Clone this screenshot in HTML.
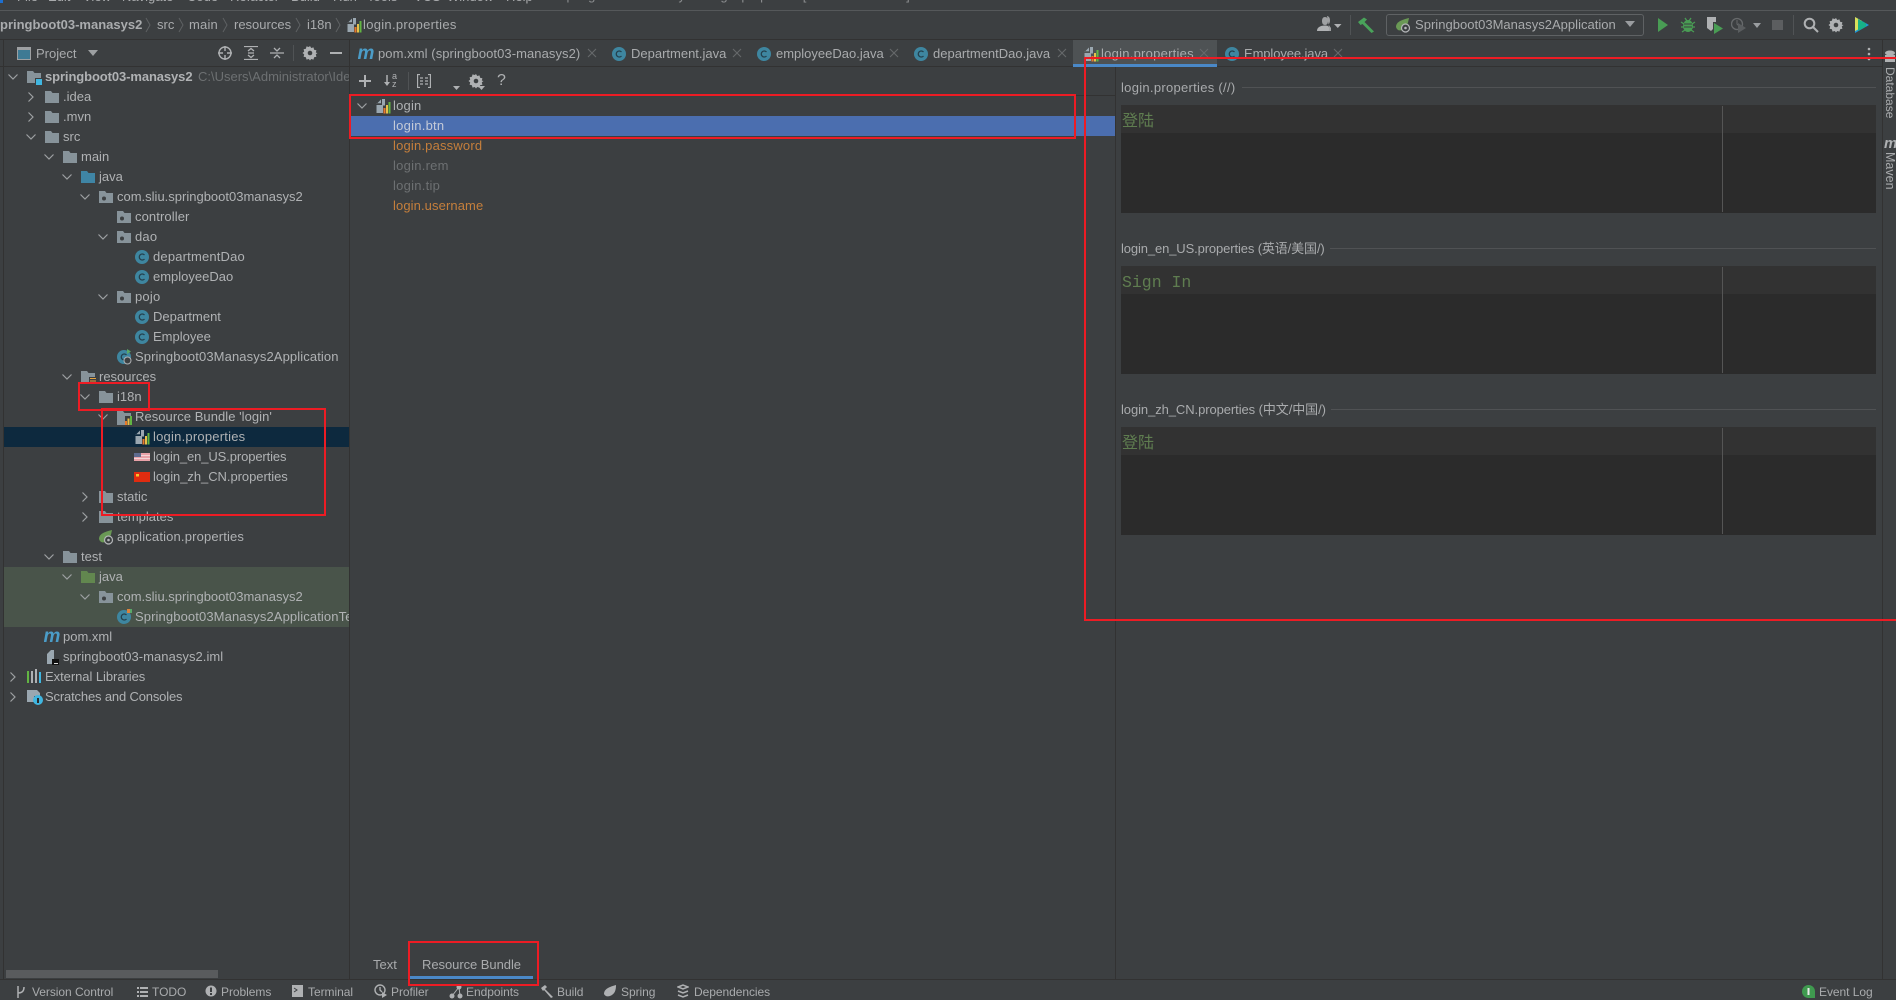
<!DOCTYPE html>
<html lang="en"><head><meta charset="utf-8"><title>login.properties</title>
<style>
html,body{margin:0;padding:0;background:#3c3f41;}
#p{position:relative;width:1896px;height:1000px;overflow:hidden;background:#3c3f41;font:13px/20px "Liberation Sans","Noto Sans CJK SC",sans-serif;color:#b0b2b4;}
.t{position:absolute;white-space:nowrap;height:20px;line-height:20px;}
.r{position:absolute;}
svg.i{position:absolute;width:16px;height:16px;overflow:visible;}
svg.x{position:absolute;width:10px;height:10px;top:48px;}
.red{position:absolute;border:2px solid #ed1c24;box-sizing:border-box;}
.g{color:#a9abad}
.o{color:#c57f3c}
.d{color:#6d7072}
.s{font-size:12px;letter-spacing:-.05px}
</style></head><body>
<svg width="0" height="0" style="position:absolute">
<defs>
<symbol id="dn" viewBox="0 0 16 16"><path d="M3.5 5.5L8 10l4.5-4.5" fill="none" stroke="#9da0a2" stroke-width="1.2"/></symbol>
<symbol id="rt" viewBox="0 0 16 16"><path d="M5.5 3.5L10 8l-4.5 4.5" fill="none" stroke="#9da0a2" stroke-width="1.2"/></symbol>
<symbol id="cx" viewBox="0 0 10 10"><path d="M1 1l8 8M9 1l-8 8" fill="none" stroke="#66696b" stroke-width="1.1"/></symbol>
<symbol id="f" viewBox="0 0 16 16"><path d="M1 2h6l1.5 2H15v10H1z" fill="#87939a"/></symbol>
<symbol id="fj" viewBox="0 0 16 16"><path d="M1 2h6l1.5 2H15v10H1z" fill="#3f85a5"/></symbol>
<symbol id="ft" viewBox="0 0 16 16"><path d="M1 2h6l1.5 2H15v10H1z" fill="#62874f"/></symbol>
<symbol id="fp" viewBox="0 0 16 16"><path d="M1 2h6l1.5 2H15v10H1z" fill="#87939a"/><circle cx="6" cy="9.5" r="2" fill="#3c3f41"/></symbol>
<symbol id="fm" viewBox="0 0 16 16"><path d="M1 2h6l1.5 2H15v10H1z" fill="#87939a"/><rect x="9" y="9" width="7" height="7" fill="#3c3f41"/><rect x="10" y="10" width="6" height="6" fill="#40b6e0"/></symbol>
<symbol id="fr" viewBox="0 0 16 16"><path d="M1 2h6l1.5 2H15v10H1z" fill="#87939a"/><rect x="9" y="8" width="7" height="8" fill="#3c3f41"/><path d="M10 9.5h6M10 12h6M10 14.5h6" stroke="#e8a33d" stroke-width="1.1"/></symbol>
<symbol id="c" viewBox="0 0 16 16"><circle cx="8" cy="8" r="7" fill="#3e86a0"/><path d="M10.5 6a3 3 0 1 0 0 4" fill="none" stroke="#24404d" stroke-width="1.3"/></symbol>
<symbol id="cr" viewBox="0 0 16 16"><circle cx="8" cy="8" r="7" fill="#3e86a0"/><path d="M10.5 6a3 3 0 1 0 0 4" fill="none" stroke="#24404d" stroke-width="1.3"/><path d="M11 0l4 2.5L11 5z" fill="#59a869"/><circle cx="11.5" cy="11.5" r="3.5" fill="#3c3f41" stroke="#afb1b3"/></symbol>
<symbol id="ct" viewBox="0 0 16 16"><circle cx="8" cy="8" r="7" fill="#3e86a0"/><path d="M10.5 6a3 3 0 1 0 0 4" fill="none" stroke="#24404d" stroke-width="1.3"/><path d="M11 0h3v4h-3z" fill="#d9823b"/><path d="M14 0h2v4h-2z" fill="#59a869"/></symbol>
<symbol id="b" viewBox="0 0 16 16"><path d="M1.5 6L6 1.5v3.8H1.8z" fill="#9aa7b0"/><path d="M7 1h3v6.5H8V15H1.5V7H7z" fill="#9aa7b0"/><rect x="8.5" y="10" width="2" height="5.5" fill="#e8792b"/><rect x="11" y="7" width="2" height="8.5" fill="#e7c04a"/><rect x="13.5" y="4" width="2" height="11.5" fill="#62b543"/></symbol>
<symbol id="fb" viewBox="0 0 16 16"><path d="M1 2h6l1.5 2H15v3h-6v9H1z" fill="#87939a"/><rect x="9" y="12" width="2" height="4" fill="#e8792b"/><rect x="11.5" y="9.5" width="2" height="6.5" fill="#e7c04a"/><rect x="14" y="7" width="2" height="9" fill="#62b543"/></symbol>
<symbol id="m" viewBox="0 0 16 16"><text x="8" y="13" text-anchor="middle" font-family="Liberation Sans" font-style="italic" font-weight="700" font-size="19" fill="#4b9cc7">m</text></symbol>
<symbol id="leaf" viewBox="0 0 16 16"><path d="M1 10C1 5 6 3 14 1c-1 5-2 10-7 12-3 1-5 0-6-3z" fill="#6a9955"/><circle cx="10.5" cy="11" r="4" fill="#3c3f41" stroke="#b5b7b9" stroke-width="1.2"/><circle cx="10.5" cy="11" r="1.3" fill="#b5b7b9"/></symbol>
<symbol id="gear" viewBox="0 0 16 16"><path d="M8 1l1.2 2 2.3-.6.6 2.3 2.3.6-.6 2.3L15.5 8l-1.7 1.4.6 2.3-2.3.6-.6 2.3-2.3-.6L8 15.5l-1.2-1.5-2.3.6-.6-2.3-2.3-.6.6-2.3L.5 8l1.7-1.4-.6-2.3 2.3-.6.6-2.3 2.3.6z" fill="#afb1b3"/><circle cx="8" cy="8" r="2.3" fill="#3c3f41"/></symbol>
</defs>
</svg>
<div id="p">
<!-- menu -->
<div class="r" style="left:0;top:0;width:1896px;height:10px;background:#3c3f41;overflow:hidden">
<div class="t" style="left:17px;top:-13px;color:#a9abad">File</div><div class="t" style="left:48px;top:-13px;color:#a9abad">Edit</div><div class="t" style="left:83px;top:-13px;color:#a9abad">View</div><div class="t" style="left:122px;top:-13px;color:#a9abad">Navigate</div><div class="t" style="left:187px;top:-13px;color:#a9abad">Code</div><div class="t" style="left:230px;top:-13px;color:#a9abad">Refactor</div><div class="t" style="left:291px;top:-13px;color:#a9abad">Build</div><div class="t" style="left:333px;top:-13px;color:#a9abad">Run</div><div class="t" style="left:367px;top:-13px;color:#a9abad">Tools</div><div class="t" style="left:414px;top:-13px;color:#a9abad">VCS</div><div class="t" style="left:447px;top:-13px;color:#a9abad">Window</div><div class="t" style="left:506px;top:-13px;color:#a9abad">Help</div>
<div class="t" style="left:560px;top:-14px;color:#8a8c8e">springboot03-manasys2 - login.properties [Resource Bundle]</div>
<div class="r" style="left:0;top:0;width:3px;height:3px;background:#1d6fd0"></div>
</div>
<div class="r" style="left:0;top:10px;width:1896px;height:1px;background:#55585a"></div>
<!-- breadcrumb -->
<div class="r" style="left:0;top:39px;width:1896px;height:1px;background:#323232"></div>
<div class="t" style="left:0;top:15px;font-weight:700;color:#aaacae;letter-spacing:0">pringboot03-manasys2</div>
<div class="t g" style="left:157px;top:15px">src</div>
<div class="t g" style="left:189px;top:15px;letter-spacing:.2px">main</div>
<div class="t g" style="left:234px;top:15px">resources</div>
<div class="t g" style="left:307px;top:15px">i18n</div>
<svg class="i" style="left:346px;top:17px"><use href="#b"/></svg>
<div class="t g" style="left:363px;top:15px;letter-spacing:.3px">login.properties</div>
<svg class="r" style="left:0;top:15px" width="345" height="20" fill="none" stroke="#5e6163"><path d="M146 3l4 7-4 7M179 3l4 7-4 7M223 3l4 7-4 7M296 3l4 7-4 7M336 3l4 7-4 7"/></svg>
<!-- toolbar right -->
<svg class="r" style="left:1316px;top:16px" width="30" height="18"><path d="M9 1c2 0 3 1.500 3 4s-1 4-3 4-3-1.500-3-4 1-4 3-4zM11 0c2 .3 3 2 3 4.500 0 1.500-.5 3-1.500 4L15 12v3h-2v-4z" fill="#9fa1a3"/><path d="M1 15c0-3.500 3-5.500 8-5.500s4 2 4 5.500z" fill="#afb1b3"/><path d="M18 8h7.500l-3.700 4z" fill="#afb1b3"/></svg>
<div class="r" style="left:1350px;top:15px;width:1px;height:20px;background:#505355"></div>
<svg class="r" style="left:1358px;top:17px" width="18" height="18"><path d="M0 5L6 .5l3 2-2.500 2.500L16 14.500 13.500 16 4.500 7 2.500 8z" fill="#49a35a"/></svg>
<div class="r" style="left:1386px;top:14px;width:258px;height:22px;box-sizing:border-box;border:1px solid #5f6264;border-radius:3px;background:#3c3f41"></div>
<svg class="i" style="left:1395px;top:17px"><use href="#leaf"/></svg>
<div class="t g" style="left:1415px;top:15px;letter-spacing:.02px">Springboot03Manasys2Application</div>
<svg class="r" style="left:1625px;top:21px" width="10" height="8"><path d="M0 0h10L5 6z" fill="#9a9da0"/></svg>
<svg class="r" style="left:1657px;top:17px" width="12" height="16"><path d="M1 1l10 7-10 7z" fill="#499c54"/></svg>
<svg class="r" style="left:1680px;top:16px" width="16" height="18"><ellipse cx="8" cy="10" rx="5" ry="6" fill="#499c54"/><path d="M1 6l3 2M15 6l-3 2M1 11h3M15 11h-3M2 16l3-2M14 16l-3-2M5 2l2 3M11 2l-2 3" stroke="#499c54" stroke-width="1.3"/><path d="M4 8h8M4 11h8" stroke="#3c3f41"/></svg>
<svg class="r" style="left:1706px;top:16px" width="18" height="18"><path d="M1 1h9v5H7v7l-2 2-4-3z" fill="#afb1b3"/><path d="M8 7l9 5.500-9 5.500z" fill="#499c54"/></svg>
<svg class="r" style="left:1731px;top:17px" width="16" height="18" opacity=".45"><circle cx="6" cy="7" r="5.500" fill="none" stroke="#9da0a2" stroke-width="1.3"/><path d="M6 3v4l2 2" stroke="#9da0a2" fill="none"/><path d="M7 6l8 5-8 5z" fill="#7f8284"/></svg>
<svg class="r" style="left:1753px;top:23px" width="9" height="6"><path d="M0 0h8L4 5z" fill="#9a9da0"/></svg>
<div class="r" style="left:1772px;top:20px;width:11px;height:10px;background:#5c5e60"></div>
<div class="r" style="left:1793px;top:15px;width:1px;height:20px;background:#505355"></div>
<svg class="r" style="left:1803px;top:17px" width="16" height="16" fill="none" stroke="#afb1b3" stroke-width="2"><circle cx="6.500" cy="6.500" r="4.800"/><path d="M10 10l5 5"/></svg>
<svg class="i" style="left:1828px;top:17px"><use href="#gear"/></svg>
<svg class="r" style="left:1855px;top:17px" width="15" height="16"><path d="M0 0l14 8-14 8z" fill="#2396d8"/><path d="M0 0l7 4v6l-7 4z" fill="#d9e05a"/><path d="M3 2l8 4.500v3L3 14z" fill="#17b187"/><path d="M0 3l3-1.500v11L0 14z" fill="#d9e05a"/></svg>
<!-- project header -->
<svg class="r" style="left:17px;top:47px" width="14" height="14"><rect x=".5" y=".5" width="13" height="12" fill="#3e7a94" stroke="#9da0a2"/><rect x="1" y="1" width="12" height="2" fill="#9da0a2"/></svg>
<div class="t g" style="left:36px;top:44px">Project</div>
<svg class="r" style="left:88px;top:50px" width="10" height="7"><path d="M0 0h10L5 6z" fill="#9da0a2"/></svg>
<svg class="r" style="left:218px;top:46px" width="14" height="14" fill="none" stroke="#afb1b3" stroke-width="1.4"><circle cx="7" cy="7" r="6"/><path d="M7 0v5M7 9v5M0 7h5M9 7h5"/></svg>
<svg class="r" style="left:244px;top:46px" width="14" height="14" fill="none" stroke="#afb1b3" stroke-width="1.3"><path d="M0 .5h14M0 13.500h14M4 5l3-2.500L10 5M4 9l3 2.500L10 9M4 7h6"/></svg>
<svg class="r" style="left:270px;top:46px" width="14" height="14" fill="none" stroke="#afb1b3" stroke-width="1.3"><path d="M0 7h14M4 2l3 3 3-3M4 12l3-3 3 3"/></svg>
<div class="r" style="left:293px;top:45px;width:1px;height:16px;background:#505355"></div>
<svg class="i" style="left:302px;top:45px"><use href="#gear"/></svg>
<div class="r" style="left:330px;top:52px;width:12px;height:2px;background:#afb1b3"></div>
<div class="r" style="left:0;top:66px;width:1882px;height:1px;background:#323232"></div>
<div class="r" style="left:3px;top:40px;width:1px;height:940px;background:#323232"></div>
<div class="r" style="left:349px;top:40px;width:1px;height:940px;background:#323232"></div>
<!-- tabs -->
<svg class="i" style="left:358px;top:46px"><use href="#m"/></svg>
<div class="t g" style="left:378px;top:44px;letter-spacing:.07px">pom.xml (springboot03-manasys2)</div><svg class="x" style="left:587px"><use href="#cx"/></svg>
<svg class="i" style="left:611px;top:46px"><use href="#c"/></svg>
<div class="t g" style="left:631px;top:44px">Department.java</div><svg class="x" style="left:732px"><use href="#cx"/></svg>
<svg class="i" style="left:756px;top:46px"><use href="#c"/></svg>
<div class="t g" style="left:776px;top:44px">employeeDao.java</div><svg class="x" style="left:889px"><use href="#cx"/></svg>
<svg class="i" style="left:913px;top:46px"><use href="#c"/></svg>
<div class="t g" style="left:933px;top:44px">departmentDao.java</div><svg class="x" style="left:1057px"><use href="#cx"/></svg>
<div class="r" style="left:1073px;top:40px;width:144px;height:27px;background:#4e5254"></div>
<div class="r" style="left:1073px;top:64px;width:144px;height:3px;background:#4a88c7"></div>
<svg class="i" style="left:1083px;top:46px"><use href="#b"/></svg>
<div class="t g" style="left:1101px;top:44px;letter-spacing:.25px">login.properties</div><svg class="x" style="left:1199px"><use href="#cx"/></svg>
<svg class="i" style="left:1224px;top:46px"><use href="#c"/></svg>
<div class="t g" style="left:1244px;top:44px;letter-spacing:-.1px">Employee.java</div><svg class="x" style="left:1333px"><use href="#cx"/></svg>
<svg class="r" style="left:1867px;top:47px" width="4" height="14"><circle cx="2" cy="2" r="1.300" fill="#afb1b3"/><circle cx="2" cy="7" r="1.300" fill="#afb1b3"/><circle cx="2" cy="12" r="1.300" fill="#afb1b3"/></svg>
<!-- right strip -->
<div class="r" style="left:1882px;top:40px;width:1px;height:940px;background:#323232"></div>
<svg class="r" style="left:1884px;top:50px" width="12" height="14"><ellipse cx="6" cy="3" rx="5" ry="2.500" fill="#afb1b3"/><rect x="1" y="5" width="10" height="3" fill="#afb1b3"/><rect x="1" y="9" width="10" height="3" fill="#afb1b3"/></svg>
<div class="t g" style="left:1880px;top:67px;writing-mode:vertical-rl;height:auto;width:20px;font-size:12px">Database</div>
<svg class="r" style="left:1884px;top:136px" width="12" height="14"><text x="0" y="12" font-family="Liberation Sans" font-style="italic" font-weight="700" font-size="15" fill="#afb1b3">m</text></svg>
<div class="t g" style="left:1880px;top:152px;writing-mode:vertical-rl;height:auto;width:20px;font-size:12.5px">Maven</div>
<!-- project tree rows -->
<div class="r" style="left:4px;top:427px;width:345px;height:20px;background:#0d293e"></div>
<div class="r" style="left:4px;top:567px;width:345px;height:60px;background:#49544a"></div>
<div class="r" style="left:0;top:1px;width:349px;height:0">
<svg class="i" style="left:5px;top:68px"><use href="#dn"/></svg><svg class="i" style="left:26px;top:68px"><use href="#fm"/></svg><div class="t" style="left:45px;top:66px;font-weight:700;letter-spacing:-.1px">springboot03-manasys2</div><div class="t d" style="left:198px;top:66px;width:151px;overflow:hidden">C:\Users\Administrator\IdeaProjects</div>
<svg class="i" style="left:23px;top:88px"><use href="#rt"/></svg><svg class="i" style="left:44px;top:88px"><use href="#f"/></svg><div class="t" style="left:63px;top:86px">.idea</div>
<svg class="i" style="left:23px;top:108px"><use href="#rt"/></svg><svg class="i" style="left:44px;top:108px"><use href="#f"/></svg><div class="t" style="left:63px;top:106px">.mvn</div>
<svg class="i" style="left:23px;top:128px"><use href="#dn"/></svg><svg class="i" style="left:44px;top:128px"><use href="#f"/></svg><div class="t" style="left:63px;top:126px">src</div>
<svg class="i" style="left:41px;top:148px"><use href="#dn"/></svg><svg class="i" style="left:62px;top:148px"><use href="#f"/></svg><div class="t" style="left:81px;top:146px">main</div>
<svg class="i" style="left:59px;top:168px"><use href="#dn"/></svg><svg class="i" style="left:80px;top:168px"><use href="#fj"/></svg><div class="t" style="left:99px;top:166px">java</div>
<svg class="i" style="left:77px;top:188px"><use href="#dn"/></svg><svg class="i" style="left:98px;top:188px"><use href="#fp"/></svg><div class="t" style="left:117px;top:186px">com.sliu.springboot03manasys2</div>
<svg class="i" style="left:116px;top:208px"><use href="#fp"/></svg><div class="t" style="left:135px;top:206px;letter-spacing:.1px">controller</div>
<svg class="i" style="left:95px;top:228px"><use href="#dn"/></svg><svg class="i" style="left:116px;top:228px"><use href="#fp"/></svg><div class="t" style="left:135px;top:226px;letter-spacing:.2px">dao</div>
<svg class="i" style="left:134px;top:248px"><use href="#c"/></svg><div class="t" style="left:153px;top:246px;letter-spacing:.18px">departmentDao</div>
<svg class="i" style="left:134px;top:268px"><use href="#c"/></svg><div class="t" style="left:153px;top:266px">employeeDao</div>
<svg class="i" style="left:95px;top:288px"><use href="#dn"/></svg><svg class="i" style="left:116px;top:288px"><use href="#fp"/></svg><div class="t" style="left:135px;top:286px;letter-spacing:.2px">pojo</div>
<svg class="i" style="left:134px;top:308px"><use href="#c"/></svg><div class="t" style="left:153px;top:306px">Department</div>
<svg class="i" style="left:134px;top:328px"><use href="#c"/></svg><div class="t" style="left:153px;top:326px">Employee</div>
<svg class="i" style="left:116px;top:348px"><use href="#cr"/></svg><div class="t" style="left:135px;top:346px;letter-spacing:.11px">Springboot03Manasys2Application</div>
<svg class="i" style="left:59px;top:368px"><use href="#dn"/></svg><svg class="i" style="left:80px;top:368px"><use href="#fr"/></svg><div class="t" style="left:99px;top:366px">resources</div>
<svg class="i" style="left:77px;top:388px"><use href="#dn"/></svg><svg class="i" style="left:98px;top:388px"><use href="#f"/></svg><div class="t" style="left:117px;top:386px">i18n</div>
<svg class="i" style="left:95px;top:408px"><use href="#dn"/></svg><svg class="i" style="left:116px;top:408px"><use href="#fb"/></svg><div class="t" style="left:135px;top:406px;letter-spacing:.05px">Resource Bundle 'login'</div>
<svg class="i" style="left:134px;top:428px"><use href="#b"/></svg><div class="t" style="left:153px;top:426px;letter-spacing:.22px">login.properties</div>
<svg class="r" style="left:134px;top:452px" width="16" height="8"><rect width="16" height="8" fill="#e9a2a8"/><rect y="2" width="16" height="1" fill="#f3d5d7"/><rect y="5" width="16" height="1" fill="#f3d5d7"/><rect width="7" height="4" fill="#5f6b8e"/></svg><div class="t" style="left:153px;top:446px;letter-spacing:-.11px">login_en_US.properties</div>
<svg class="r" style="left:134px;top:471px" width="16" height="10"><rect width="16" height="10" fill="#e02c10"/><rect x="2" y="2" width="3" height="2.500" fill="#f4c430"/></svg><div class="t" style="left:153px;top:466px;letter-spacing:-.05px">login_zh_CN.properties</div>
<svg class="i" style="left:77px;top:488px"><use href="#rt"/></svg><svg class="i" style="left:98px;top:488px"><use href="#f"/></svg><div class="t" style="left:117px;top:486px">static</div>
<svg class="i" style="left:77px;top:508px"><use href="#rt"/></svg><svg class="i" style="left:98px;top:508px"><use href="#f"/></svg><div class="t" style="left:117px;top:506px">templates</div>
<svg class="i" style="left:98px;top:528px"><use href="#leaf"/></svg><div class="t" style="left:117px;top:526px;letter-spacing:.16px">application.properties</div>
<svg class="i" style="left:41px;top:548px"><use href="#dn"/></svg><svg class="i" style="left:62px;top:548px"><use href="#f"/></svg><div class="t" style="left:81px;top:546px">test</div>
<svg class="i" style="left:59px;top:568px"><use href="#dn"/></svg><svg class="i" style="left:80px;top:568px"><use href="#ft"/></svg><div class="t" style="left:99px;top:566px">java</div>
<svg class="i" style="left:77px;top:588px"><use href="#dn"/></svg><svg class="i" style="left:98px;top:588px"><use href="#fp"/></svg><div class="t" style="left:117px;top:586px">com.sliu.springboot03manasys2</div>
<svg class="i" style="left:116px;top:608px"><use href="#ct"/></svg><div class="t" style="left:135px;top:606px;width:214px;overflow:hidden;letter-spacing:.11px">Springboot03Manasys2ApplicationTests</div>
<svg class="i" style="left:44px;top:628px"><use href="#m"/></svg><div class="t" style="left:63px;top:626px">pom.xml</div>
<svg class="i" style="left:44px;top:648px"><path d="M3 5l4-4h3v14H3z" fill="#9aa7b0"/><rect x="8" y="10" width="7" height="6" fill="#111"/><rect x="10" y="14" width="4" height="1" fill="#ddd"/></svg><div class="t" style="left:63px;top:646px;letter-spacing:.05px">springboot03-manasys2.iml</div>
<svg class="i" style="left:5px;top:668px"><use href="#rt"/></svg><svg class="r" style="left:27px;top:668px" width="14" height="14"><path d="M1 2v12" stroke="#62b543" stroke-width="2"/><path d="M5 2v12" stroke="#afb1b3" stroke-width="2"/><path d="M9 0v14" stroke="#afb1b3" stroke-width="2"/><path d="M13 3v11" stroke="#40b6e0" stroke-width="2"/></svg><div class="t" style="left:45px;top:666px;letter-spacing:-.05px">External Libraries</div>
<svg class="i" style="left:5px;top:688px"><use href="#rt"/></svg><svg class="r" style="left:27px;top:688px" width="16" height="16"><path d="M0 1h10l3 3v3H7v6H0z" fill="#9aa7b0"/><circle cx="11" cy="11" r="5" fill="#40b6e0"/><rect x="10" y="9" width="2" height="5" fill="#2b2b2b"/></svg><div class="t" style="left:45px;top:686px;letter-spacing:-.16px">Scratches and Consoles</div>
</div>
<!-- scrollbar -->
<div class="r" style="left:6px;top:970px;width:212px;height:8px;background:#595b5d"></div>

<!-- bundle tool row -->
<svg class="r" style="left:359px;top:75px" width="12" height="12"><path d="M6 0v12M0 6h12" stroke="#afb1b3" stroke-width="2"/></svg>
<svg class="r" style="left:384px;top:72px" width="14" height="17" fill="#afb1b3"><path d="M3 3v10" stroke="#afb1b3" stroke-width="1.500"/><path d="M0 10h6l-3 4z"/><text x="8" y="7" font-size="9" font-family="Liberation Sans">a</text><text x="8" y="15" font-size="9" font-family="Liberation Sans">z</text></svg>
<div class="r" style="left:408px;top:72px;width:1px;height:18px;background:#505355"></div>
<svg class="r" style="left:417px;top:74px" width="14" height="14" fill="none" stroke="#afb1b3" stroke-width="1.300"><path d="M3 .5H.5v13H3M3 4h3M3 7h3M3 10h3M8 4h3M8 7h3M8 10h3M11 .5h2.500v13H11"/></svg>
<svg class="r" style="left:453px;top:86px" width="7" height="4"><path d="M0 0h7L3.500 4z" fill="#afb1b3"/></svg>
<svg class="i" style="left:468px;top:73px"><use href="#gear"/></svg>
<svg class="r" style="left:478px;top:86px" width="7" height="4"><path d="M0 0h7L3.500 4z" fill="#afb1b3"/></svg>
<div class="t" style="left:497px;top:71px;font-size:16px;color:#afb1b3">?</div>
<div class="r" style="left:350px;top:95px;width:765px;height:1px;background:#323232"></div>
<div class="r" style="left:350px;top:116px;width:765px;height:20px;background:#4b6eaf"></div>
<svg class="i" style="left:354px;top:98px"><use href="#dn"/></svg><svg class="i" style="left:375px;top:98px"><use href="#b"/></svg><div class="t" style="left:393px;top:96px;letter-spacing:.2px">login</div>
<div class="t" style="left:393px;top:116px;color:#c4cad8;letter-spacing:.25px">login.btn</div>
<div class="t o" style="left:393px;top:136px;letter-spacing:.18px">login.password</div>
<div class="t d" style="left:393px;top:156px;letter-spacing:.25px">login.rem</div>
<div class="t d" style="left:393px;top:176px;letter-spacing:.25px">login.tip</div>
<div class="t o" style="left:393px;top:196px;letter-spacing:.1px">login.username</div>
<div class="r" style="left:1115px;top:67px;width:1px;height:913px;background:#323232"></div>

<!-- right editors -->
<div class="t g" style="left:1121px;top:78px;letter-spacing:.29px">login.properties (//)</div>
<div class="r" style="left:1242px;top:87px;width:634px;height:1px;background:#505254"></div>
<div class="r" style="left:1121px;top:105px;width:755px;height:108px;background:#2b2b2b"></div>
<div class="r" style="left:1121px;top:105px;width:755px;height:28px;background:#323232"></div>
<div class="r" style="left:1722px;top:106px;width:1px;height:106px;background:#555"></div>
<div class="t" style="left:1122px;top:109px;font:16px/20px 'WenQuanYi Zen Hei','Noto Sans CJK SC',sans-serif;color:#5f7d50">登陆</div>

<div class="t g" style="left:1121px;top:239px;letter-spacing:-.12px">login_en_US.properties (英语/美国/)</div>
<div class="r" style="left:1330px;top:248px;width:546px;height:1px;background:#505254"></div>
<div class="r" style="left:1121px;top:266px;width:755px;height:108px;background:#2b2b2b"></div>
<div class="r" style="left:1121px;top:266px;width:755px;height:28px;background:#323232"></div>
<div class="r" style="left:1722px;top:267px;width:1px;height:106px;background:#555"></div>
<div class="t" style="left:1122px;top:273px;font:16.5px/20px 'Liberation Mono',monospace;color:#5f7d50">Sign In</div>

<div class="t g" style="left:1121px;top:400px;letter-spacing:-.08px">login_zh_CN.properties (中文/中国/)</div>
<div class="r" style="left:1331px;top:409px;width:545px;height:1px;background:#505254"></div>
<div class="r" style="left:1121px;top:427px;width:755px;height:108px;background:#2b2b2b"></div>
<div class="r" style="left:1121px;top:427px;width:755px;height:28px;background:#323232"></div>
<div class="r" style="left:1722px;top:428px;width:1px;height:106px;background:#555"></div>
<div class="t" style="left:1122px;top:431px;font:16px/20px 'WenQuanYi Zen Hei','Noto Sans CJK SC',sans-serif;color:#5f7d50">登陆</div>

<!-- bottom tabs -->
<div class="t g" style="left:373px;top:955px">Text</div>
<div class="t g" style="left:422px;top:955px;letter-spacing:-.05px">Resource Bundle</div>
<div class="r" style="left:409px;top:976px;width:124px;height:3px;background:#4a88c7"></div>

<!-- status bar -->
<div class="r" style="left:0;top:979px;width:1896px;height:1px;background:#323232"></div>
<svg class="r" style="left:16px;top:985px" width="10" height="14" fill="none" stroke="#afb1b3" stroke-width="1.500"><path d="M2 1v12M2 8c4 0 6-2 6-6"/></svg>
<div class="t g s" style="left:32px;top:982px">Version Control</div>
<svg class="r" style="left:137px;top:986px" width="11" height="11" fill="#afb1b3"><rect y="1" width="2" height="2"/><rect x="3" y="1" width="8" height="2"/><rect y="5" width="2" height="2"/><rect x="3" y="5" width="8" height="2"/><rect y="9" width="2" height="2"/><rect x="3" y="9" width="8" height="2"/></svg>
<div class="t g s" style="left:152px;top:982px">TODO</div>
<svg class="r" style="left:205px;top:985px" width="12" height="12"><circle cx="6" cy="6" r="5.500" fill="#afb1b3"/><rect x="5" y="2.500" width="2" height="4.500" fill="#3c3f41"/><rect x="5" y="8" width="2" height="2" fill="#3c3f41"/></svg>
<div class="t g s" style="left:221px;top:982px">Problems</div>
<svg class="r" style="left:292px;top:985px" width="11" height="12"><rect width="11" height="12" fill="#afb1b3"/><path d="M2 3l3 2-3 2" fill="none" stroke="#3c3f41"/></svg>
<div class="t g s" style="left:308px;top:982px">Terminal</div>
<svg class="r" style="left:374px;top:984px" width="14" height="15" fill="none" stroke="#afb1b3" stroke-width="1.400"><circle cx="6" cy="6" r="5"/><path d="M6 3v3l2 2"/><path d="M8 8l5 3-5 3z" fill="#afb1b3" stroke="none"/></svg>
<div class="t g s" style="left:391px;top:982px">Profiler</div>
<svg class="r" style="left:449px;top:984px" width="14" height="15" fill="#afb1b3"><circle cx="10" cy="3" r="2.500"/><circle cx="3" cy="12" r="2.500"/><circle cx="11" cy="12" r="2.500"/><path d="M3 12L10 3l1 9" fill="none" stroke="#afb1b3"/></svg>
<div class="t g s" style="left:466px;top:982px">Endpoints</div>
<svg class="r" style="left:540px;top:984px" width="14" height="14"><path d="M1 4l4-3 2 2-2 2 8 8-2 1-7-8-1 1z" fill="#afb1b3"/></svg>
<div class="t g s" style="left:557px;top:982px">Build</div>
<svg class="r" style="left:604px;top:985px" width="13" height="12"><path d="M0 9C0 4 5 2 12 0c0 5-1 9-6 11-3 1-5 0-6-2z" fill="#afb1b3"/></svg>
<div class="t g s" style="left:621px;top:982px">Spring</div>
<svg class="r" style="left:677px;top:984px" width="12" height="14" fill="none" stroke="#afb1b3" stroke-width="1.500"><path d="M1 3l5-2 5 2-5 2zM1 7l5 2 5-2M1 11l5 2 5-2"/></svg>
<div class="t g s" style="left:694px;top:982px">Dependencies</div>
<svg class="r" style="left:1802px;top:985px" width="13" height="13"><path d="M6.500 0a6.500 6.500 0 1 0 0 13H13V6.500A6.500 6.500 0 0 0 6.500 0z" fill="#3f9a4f"/><rect x="5.500" y="3" width="2" height="7" fill="#e8e8e8"/></svg>
<div class="t g s" style="left:1819px;top:982px">Event Log</div>

<!-- red annotation boxes -->
<div class="red" style="left:349px;top:94px;width:727px;height:45px"></div>
<div class="red" style="left:78px;top:382px;width:72px;height:29px"></div>
<div class="red" style="left:101px;top:408px;width:225px;height:108px"></div>
<div class="red" style="left:1084px;top:57px;width:830px;height:564px"></div>
<div class="red" style="left:408px;top:941px;width:131px;height:45px"></div>
</div>
</body></html>
